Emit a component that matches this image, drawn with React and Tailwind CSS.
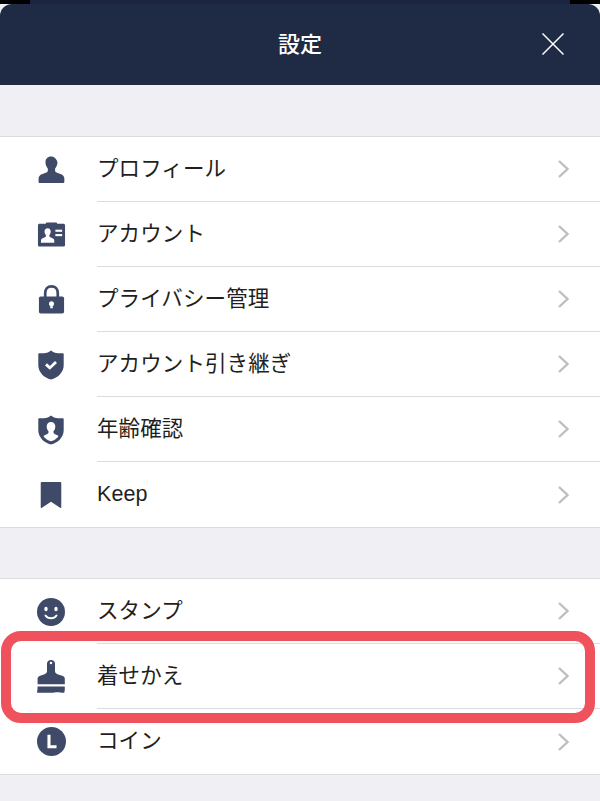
import { useState } from "react";

const ICON = "#3e4a68";

const UserIcon = () => (
  <svg width="28" height="28" viewBox="0 0 30 30" fill={ICON}>
    <path d="M15 .5c-3.800 0-5.900 2.600-5.900 6.200 0 2.800 1.100 5.200 2.500 6.600v2.600c0 .9-.6 1.500-1.500 1.900-2.900 1.100-5.600 1.800-7 3.200-.9.900-1.400 2-1.400 3.400v3.500c0 .6.400 1 1 1h25.600c.6 0 1-.4 1-1v-3.500c0-1.400-.5-2.500-1.400-3.400-1.400-1.400-4.100-2.100-7-3.200-.9-.4-1.500-1-1.500-1.900v-2.600c1.400-1.400 2.500-3.800 2.500-6.600C20.900 3.100 18.800.5 15 .5z" />
  </svg>
);

const CardIcon = () => (
  <svg width="29" height="29" viewBox="0 0 30 30">
    <path fill={ICON} d="M10.500 2.500h9c.8 0 1.300.4 1.500 1.300h6.300c1 0 1.700.7 1.700 1.700v20.300c0 1-.7 1.700-1.700 1.700H2.700c-1 0-1.700-.7-1.700-1.700V5.500c0-1 .7-1.700 1.700-1.700H9c.2-.9.700-1.300 1.500-1.300z" />
    <path fill="#fff" d="M11 8.500c-2 0-3.200 1.500-3.200 3.500 0 1.500.6 2.800 1.400 3.600v1c0 .6-.4 1-1 1.200-1.500.6-3.200 1.100-3.700 2.200-.3.500-.4 1.300-.4 3.500h13.800c0-2.200-.1-3-.4-3.500-.5-1.100-2.200-1.600-3.700-2.200-.6-.2-1-.6-1-1.200v-1c.8-.8 1.400-2.100 1.400-3.600 0-2-1.200-3.500-3.200-3.500z" />
    <rect x="19" y="10" width="7" height="2.200" fill="#fff" />
    <rect x="19" y="14.500" width="7" height="2.200" fill="#fff" />
  </svg>
);

const LockIcon = () => (
  <svg width="29" height="29" viewBox="0 0 30 30">
    <path fill="none" stroke={ICON} strokeWidth="2.800" d="M8.500 14V8.500C8.500 4.200 11 1.500 15 1.500s6.500 2.700 6.500 7V14" />
    <rect x="2" y="12" width="26" height="17.500" rx="1.800" fill={ICON} />
    <circle cx="15" cy="19.500" r="2.600" fill="#fff" />
    <path fill="#fff" d="M14 20h2l.4 4h-2.800z" />
  </svg>
);

const ShieldCheckIcon = () => (
  <svg width="30" height="30" viewBox="0 0 30 30">
    <path fill={ICON} d="M15 .5c2 1.500 3.400 2.200 5.400 2.600 1.800.3 3.600.3 6.400.1.600 0 .9.300.9.900v11.200c0 6.800-5.800 12.800-12.700 14.200C8.100 28.100 2.300 22.100 2.300 15.300V4.100c0-.6.300-.9.900-.9 2.800.2 4.600.2 6.400-.1 2-.4 3.400-1.100 5.400-2.600z" />
    <path fill="none" stroke="#fff" strokeWidth="2.800" d="M10 14.400l3.800 3.500 6.200-6" />
  </svg>
);

const ShieldUserIcon = () => (
  <svg width="30" height="30" viewBox="0 0 30 30">
    <path fill={ICON} d="M15 .5c2 1.500 3.400 2.200 5.400 2.600 1.800.3 3.600.3 6.400.1.600 0 .9.300.9.900v11.200c0 6.800-5.800 12.800-12.700 14.200C8.100 28.100 2.300 22.100 2.300 15.300V4.100c0-.6.300-.9.900-.9 2.800.2 4.600.2 6.400-.1 2-.4 3.400-1.100 5.400-2.600z" />
    <path fill="#fff" d="M15 7c-2.700 0-4.300 2-4.300 4.600 0 1.900.7 3.600 1.800 4.600v1.300c0 .7-.4 1.100-1.100 1.400-1.500.6-3.100 1.100-4 2.100 1.500 2.500 4.300 4.400 7.600 5.200 3.300-.8 6.100-2.700 7.600-5.200-.9-1-2.500-1.500-4-2.100-.7-.3-1.100-.7-1.100-1.400v-1.300c1.100-1 1.800-2.700 1.800-4.600C19.300 9 17.700 7 15 7z" />
  </svg>
);

const BookmarkIcon = () => (
  <svg width="28" height="28" viewBox="0 0 30 30" fill={ICON}>
    <path d="M5 1h20c.6 0 1 .4 1 1v26.500c0 .5-.3.7-.8.4L15 22.200 4.800 28.900c-.5.300-.8.100-.8-.4V2c0-.6.400-1 1-1z" />
  </svg>
);

const SmileIcon = () => (
  <svg width="28" height="28" viewBox="0 0 28 28">
    <circle cx="14" cy="14" r="14" fill={ICON} />
    <ellipse cx="9" cy="11" rx="1.700" ry="2.200" fill="#fff" />
    <ellipse cx="19" cy="11" rx="1.700" ry="2.200" fill="#fff" />
    <path fill="none" stroke="#fff" strokeWidth="2" strokeLinecap="round" d="M8.500 17.500c1.300 1.900 3.200 2.800 5.500 2.800s4.200-.9 5.500-2.800" />
  </svg>
);

const BrushIcon = () => (
  <svg width="28" height="33" viewBox="0 0 28 33">
    <path fill={ICON} fillRule="evenodd" d="M14 0c2.300 0 4 1.600 4 3.500V11c0 1.700.9 2.700 3 3.400l4.300 1.400c1.400.5 2.300 1.400 2.500 2.800v5.600H.6v-5.600c.2-1.400 1.100-2.300 2.500-2.800L7 14.400c2.100-.7 3-1.700 3-3.400V3.500C10 1.600 11.700 0 14 0zm0 1.700a1.300 1.300 0 100 2.600 1.300 1.300 0 000-2.600z" />
    <path fill={ICON} d="M.6 26.500h27.200c.1 1.900 0 3.700-.3 5.400-.1.500-.4.800-.9.800-2.600 0-4.200-.5-6.100-.5-2.100 0-3.700.5-6.900.5H.4c-.3 0-.4-.2-.3-.6.300-1.900.5-3.800.5-5.600z" />
  </svg>
);

const CoinIcon = () => (
  <svg width="29" height="29" viewBox="0 0 30 30">
    <circle cx="15" cy="15" r="15" fill={ICON} />
    <path fill="#fff" d="M10.800 8h3.200v11h6.200v3h-9.400z" />
  </svg>
);

const section1 = [
  { label: "プロフィール", icon: <UserIcon /> },
  { label: "アカウント", icon: <CardIcon /> },
  { label: "プライバシー管理", icon: <LockIcon /> },
  { label: "アカウント引き継ぎ", icon: <ShieldCheckIcon /> },
  { label: "年齢確認", icon: <ShieldUserIcon /> },
  { label: "Keep", icon: <BookmarkIcon /> },
];

const section2 = [
  { label: "スタンプ", icon: <SmileIcon /> },
  { label: "着せかえ", icon: <BrushIcon /> },
  { label: "コイン", icon: <CoinIcon /> },
];

const Row = ({ item, last }) => (
  <div className="flex h-[65px] items-stretch">
    <div className="flex w-[97px] shrink-0 items-center justify-center pl-[5px]">
      {item.icon}
    </div>
    <div
      className={`flex flex-1 items-center justify-between pr-[31px] ${
        last ? "" : "border-b border-[#dcdcdf]"
      }`}
    >
      <span className="text-[21.5px] tracking-[0.1px] text-[#1f1f21]">{item.label}</span>
      <svg width="12" height="18" viewBox="0 0 12 18" fill="none" stroke="#bdbec2" strokeWidth="2.400">
        <path d="M2 1l8.500 8L2 17" />
      </svg>
    </div>
  </div>
);

const Section = ({ items }) => (
  <div className="border-y border-[#dcdcdf] bg-white">
    {items.map((item, i) => (
      <Row key={item.label} item={item} last={i === items.length - 1} />
    ))}
  </div>
);

export default function App() {
  const [open] = useState(true);
  if (!open) return null;

  return (
    <div
      className="relative h-[801px] w-[600px] overflow-hidden bg-[#f0eff4]"
      style={{ fontFamily: '"Liberation Sans", "Noto Sans CJK JP", sans-serif' }}
    >
      {/* top edge of the sheet behind */}
      <div className="flex h-[4px] justify-center bg-black">
        <div className="w-[540px] bg-[#1c2440]" />
      </div>
      <div className="relative flex h-[81px] items-center justify-center rounded-t-[12px] bg-[#1f2a45]">
        <span className="text-[22px] font-medium text-white">設定</span>
        <svg
          className="absolute right-[35px] top-[28px]"
          width="24"
          height="24"
          viewBox="0 0 24 24"
          fill="none"
          stroke="#fff"
          strokeWidth="1.500"
        >
          <path d="M1.500 1.500l21 21M22.500 1.500l-21 21" />
        </svg>
      </div>
      <div className="h-[51px]" />
      <Section items={section1} />
      <div className="h-[50px]" />
      <Section items={section2} />
      {/* red annotation */}
      <div className="absolute left-[1px] top-[631px] h-[92px] w-[594px] rounded-[20px] border-[10px] border-[#f0525d]" />
    </div>
  );
}
